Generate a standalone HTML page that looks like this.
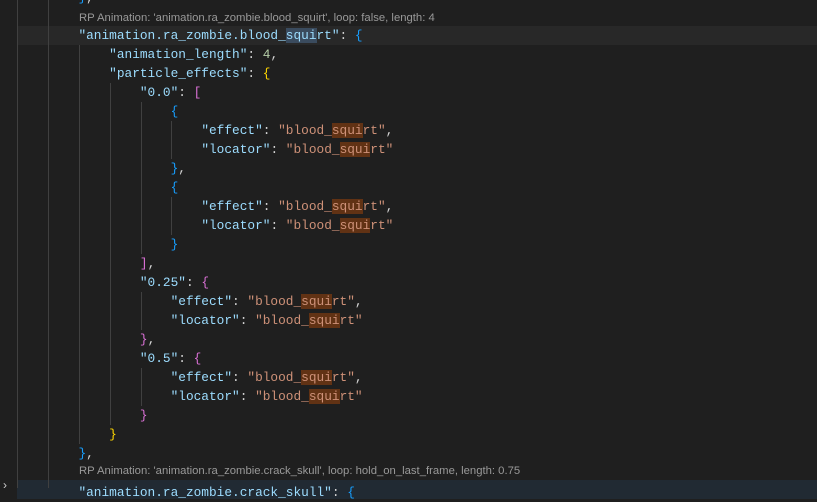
<!DOCTYPE html>
<html><head><meta charset="utf-8"><style>
html,body{margin:0;padding:0;}
body{width:817px;height:488px;background:#1f1f1f;overflow:hidden;position:relative;font-family:"Liberation Mono",monospace;font-size:12.8px;}
.l{position:absolute;left:17px;height:19px;line-height:19px;white-space:pre;color:#d4d4d4;}
.g{position:absolute;width:1px;background:#404040;}
.k{color:#9cdcfe}.s{color:#ce9178}.n{color:#b5cea8}
.y{color:#ffd700}.p{color:#da70d6}.b{color:#179fff}
.h{background:#613214}.sel{background:#3a4b5e}
.cl{position:absolute;left:79px;font-family:"Liberation Sans",sans-serif;font-size:11.3px;color:#999;height:19px;line-height:19px;white-space:pre}
</style></head><body>
<div style="position:absolute;left:17px;right:0;top:26px;height:19px;background:#282828"></div>
<div style="position:absolute;left:17px;right:0;top:480px;height:19px;background:#212a33"></div>
<div class="g" style="left:17px;top:0;height:488px"></div>
<div class="g" style="left:48px;top:0;height:488px"></div>
<div class="g" style="left:79px;top:45px;height:399px"></div>
<div class="g" style="left:110px;top:83px;height:342px"></div>
<div class="g" style="left:141px;top:102px;height:152px"></div>
<div class="g" style="left:141px;top:292px;height:38px"></div>
<div class="g" style="left:141px;top:368px;height:38px"></div>
<div class="g" style="left:171px;top:121px;height:38px"></div>
<div class="g" style="left:171px;top:197px;height:38px"></div>

<div class="l" style="top:-12px">        <span class="b">}</span>,</div>
<div class="cl" style="top:9px">RP Animation: 'animation.ra_zombie.blood_squirt', loop: false, length: 4</div>
<div class="l" style="top:26px">        <span class="k">"animation.ra_zombie.blood_<span class="sel">squi</span>rt"</span>: <span class="b">{</span></div>
<div class="l" style="top:45px">            <span class="k">"animation_length"</span>: <span class="n">4</span>,</div>
<div class="l" style="top:64px">            <span class="k">"particle_effects"</span>: <span class="y">{</span></div>
<div class="l" style="top:83px">                <span class="k">"0.0"</span>: <span class="p">[</span></div>
<div class="l" style="top:102px">                    <span class="b">{</span></div>
<div class="l" style="top:121px">                        <span class="k">"effect"</span>: <span class="s">"blood_<span class="h">squi</span>rt"</span>,</div>
<div class="l" style="top:140px">                        <span class="k">"locator"</span>: <span class="s">"blood_<span class="h">squi</span>rt"</span></div>
<div class="l" style="top:159px">                    <span class="b">}</span>,</div>
<div class="l" style="top:178px">                    <span class="b">{</span></div>
<div class="l" style="top:197px">                        <span class="k">"effect"</span>: <span class="s">"blood_<span class="h">squi</span>rt"</span>,</div>
<div class="l" style="top:216px">                        <span class="k">"locator"</span>: <span class="s">"blood_<span class="h">squi</span>rt"</span></div>
<div class="l" style="top:235px">                    <span class="b">}</span></div>
<div class="l" style="top:254px">                <span class="p">]</span>,</div>
<div class="l" style="top:273px">                <span class="k">"0.25"</span>: <span class="p">{</span></div>
<div class="l" style="top:292px">                    <span class="k">"effect"</span>: <span class="s">"blood_<span class="h">squi</span>rt"</span>,</div>
<div class="l" style="top:311px">                    <span class="k">"locator"</span>: <span class="s">"blood_<span class="h">squi</span>rt"</span></div>
<div class="l" style="top:330px">                <span class="p">}</span>,</div>
<div class="l" style="top:349px">                <span class="k">"0.5"</span>: <span class="p">{</span></div>
<div class="l" style="top:368px">                    <span class="k">"effect"</span>: <span class="s">"blood_<span class="h">squi</span>rt"</span>,</div>
<div class="l" style="top:387px">                    <span class="k">"locator"</span>: <span class="s">"blood_<span class="h">squi</span>rt"</span></div>
<div class="l" style="top:406px">                <span class="p">}</span></div>
<div class="l" style="top:425px">            <span class="y">}</span></div>
<div class="l" style="top:444px">        <span class="b">}</span>,</div>
<div class="cl" style="top:462px">RP Animation: 'animation.ra_zombie.crack_skull', loop: hold_on_last_frame, length: 0.75</div>
<div class="l" style="top:483px">        <span class="k">"animation.ra_zombie.crack_skull"</span>: <span class="b">{</span></div>
<div style="position:absolute;left:3px;top:478px;color:#ccc;font-size:12px;font-family:'Liberation Sans',sans-serif">›</div>
</body></html>
